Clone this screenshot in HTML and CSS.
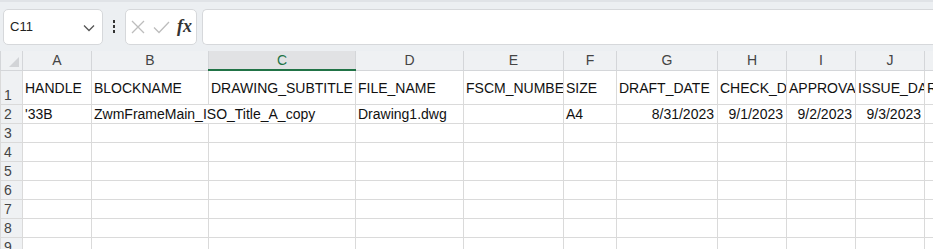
FILE: index.html
```html
<!DOCTYPE html>
<html lang="en">
<head>
    <meta charset="UTF-8">
    <title>Sheet</title>
    <link rel="stylesheet" href="styles.css">
</head>
<body>
    <div class="formula-bar">
        <div class="name-box">
            <span>C11</span>
            <svg class="chevron" width="12" height="8" viewBox="0 0 12 8"><path d="M1 1.5 L6 6.5 L11 1.5" fill="none" stroke="#555" stroke-width="1.3"/></svg>
        </div>
        <div class="dots"><i></i><i></i><i></i></div>
        <div class="fx-box">
            <svg width="16" height="16" viewBox="0 0 16 16"><path d="M2 2 L14 14 M14 2 L2 14" stroke="#bdbdbd" stroke-width="1.3"/></svg>
            <svg width="17" height="16" viewBox="0 0 17 16"><path d="M1 8.5 L6 13.5 L16 3" fill="none" stroke="#bdbdbd" stroke-width="1.3"/></svg>
            <span class="fx">fx</span>
        </div>
        <div class="formula-input"></div>
    </div>

    <table class="sheet">
        <colgroup>
            <col style="width:22px">
            <col style="width:69px">
            <col style="width:117px">
            <col style="width:147px">
            <col style="width:108px">
            <col style="width:100px">
            <col style="width:53px">
            <col style="width:101px">
            <col style="width:69px">
            <col style="width:69px">
            <col style="width:69px">
            <col style="width:100px">
        </colgroup>
        <tr class="col-head">
            <th class="corner"><span class="tri"></span></th>
            <th>A</th><th>B</th><th class="sel">C</th><th>D</th><th>E</th>
            <th>F</th><th>G</th><th>H</th><th>I</th><th>J</th><th>K</th>
        </tr>
        <tr class="tall">
            <th class="row-num">1</th>
            <td>HANDLE</td>
            <td>BLOCKNAME</td>
            <td>DRAWING_SUBTITLE</td>
            <td>FILE_NAME</td>
            <td>FSCM_NUMBER</td>
            <td>SIZE</td>
            <td>DRAFT_DATE</td>
            <td>CHECK_DATE</td>
            <td>APPROVAL_DATE</td>
            <td>ISSUE_DATE</td>
            <td>REVISION</td>
        </tr>
        <tr>
            <th class="row-num">2</th>
            <td>'33B</td>
            <td class="spill">ZwmFrameMain_ISO_Title_A_copy</td>
            <td class="no-left"></td>
            <td>Drawing1.dwg</td>
            <td></td>
            <td>A4</td>
            <td class="num">8/31/2023</td>
            <td class="num">9/1/2023</td>
            <td class="num">9/2/2023</td>
            <td class="num">9/3/2023</td>
            <td></td>
        </tr>
        <tr><th class="row-num">3</th><td></td><td></td><td></td><td></td><td></td><td></td><td></td><td></td><td></td><td></td><td></td></tr>
        <tr><th class="row-num">4</th><td></td><td></td><td></td><td></td><td></td><td></td><td></td><td></td><td></td><td></td><td></td></tr>
        <tr><th class="row-num">5</th><td></td><td></td><td></td><td></td><td></td><td></td><td></td><td></td><td></td><td></td><td></td></tr>
        <tr><th class="row-num">6</th><td></td><td></td><td></td><td></td><td></td><td></td><td></td><td></td><td></td><td></td><td></td></tr>
        <tr><th class="row-num">7</th><td></td><td></td><td></td><td></td><td></td><td></td><td></td><td></td><td></td><td></td><td></td></tr>
        <tr><th class="row-num">8</th><td></td><td></td><td></td><td></td><td></td><td></td><td></td><td></td><td></td><td></td><td></td></tr>
        <tr><th class="row-num">9</th><td></td><td></td><td></td><td></td><td></td><td></td><td></td><td></td><td></td><td></td><td></td></tr>
    </table>
</body>
</html>
```

FILE: styles.css
```css
* {
    margin: 0;
    padding: 0;
    box-sizing: border-box;
}

body {
    font-family: 'Liberation Sans', Arial, sans-serif;
    background-color: #ffffff;
    overflow: hidden;
    width: 933px;
    height: 249px;
}

.formula-bar {
    display: flex;
    align-items: center;
    height: 51px;
    padding: 0 0 0 3px;
    background-color: #eceff2;
    border-top: 2px solid #e0e3e7;
}

.name-box {
    display: flex;
    align-items: center;
    justify-content: space-between;
    width: 100px;
    height: 36px;
    padding: 0 7px 0 6px;
    background-color: #ffffff;
    border: 1px solid #d6d8db;
    border-radius: 5px;
    font-size: 13px;
    color: #222;
}

.chevron {
    margin-top: 2px;
}

.dots {
    display: flex;
    flex-direction: column;
    gap: 2px;
    width: 22px;
    align-items: center;
}

.dots i {
    display: block;
    width: 2px;
    height: 3px;
    background-color: #333;
}

.fx-box {
    display: flex;
    align-items: center;
    gap: 7px;
    width: 72px;
    height: 36px;
    padding-left: 4px;
    background-color: #ffffff;
    border: 1px solid #d6d8db;
    border-radius: 5px;
}

.fx {
    font-family: 'Liberation Serif', 'DejaVu Serif', serif;
    font-style: italic;
    font-weight: bold;
    font-size: 18px;
    color: #333;
    margin-left: 0;
}

.formula-input {
    flex: 1;
    height: 36px;
    margin-left: 5px;
    background-color: #ffffff;
    border: 1px solid #d6d8db;
    border-right: none;
    border-radius: 5px 0 0 5px;
}

.sheet {
    border-collapse: collapse;
    table-layout: fixed;
    width: 1024px;
    font-size: 14px;
    color: #111;
}

.sheet th,
.sheet td {
    border: 1px solid #dadada;
    white-space: nowrap;
    overflow: hidden;
    font-weight: normal;
    height: 19px;
    line-height: 16px;
}

.sheet td {
    padding: 0 3px 0 2px;
}

.col-head th {
    background-color: #eff1f3;
    color: #444;
    text-align: center;
    border-color: #d4d6d9;
    border-top: none;
}

.col-head th.sel {
    background-color: #e1e2e4;
    color: #217346;
    border-bottom: 2px solid #217346;
}

.corner {
    position: relative;
}

.tri {
    position: absolute;
    left: 8px;
    bottom: 3px;
    width: 0;
    height: 0;
    border-left: 10px solid transparent;
    border-bottom: 10px solid #d2d4d7;
}

.row-num {
    background-color: #eff1f3;
    color: #444;
    text-align: left;
    padding-left: 3px;
    border-color: #d4d6d9;
    border-left: none;
}

.tall th,
.tall td {
    height: 34px;
}

.tall .row-num {
    vertical-align: bottom;
    padding-bottom: 1px;
}

.tall td {
    padding-top: 2px;
}

.sheet td.spill {
    overflow: visible;
}

.sheet td.no-left {
    border-left: hidden;
}

.num {
    text-align: right;
}
```
